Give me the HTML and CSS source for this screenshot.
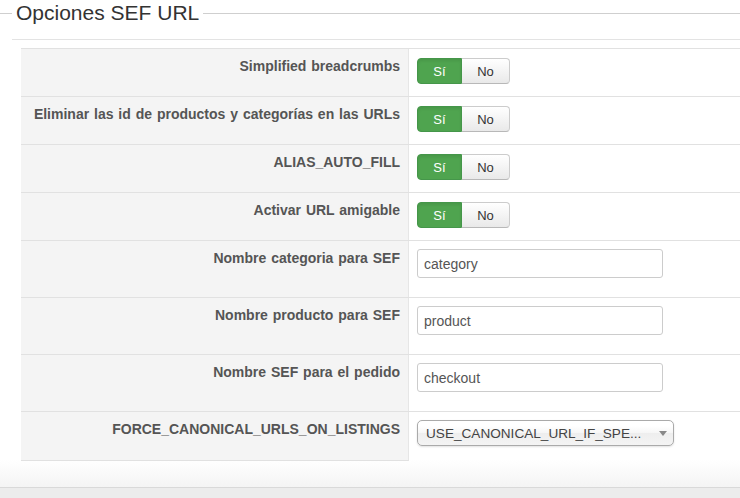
FILE: index.html
```html
<!DOCTYPE html>
<html lang="es">
<head>
<meta charset="utf-8">
<title>Opciones SEF URL</title>
<link rel="stylesheet" href="styles.css">
</head>
<body>
<fieldset class="sef">
  <legend class="sef-title">Opciones SEF URL</legend>
  <div class="sef-body">
    <div class="opts">
      <div class="row row-toggle">
        <div class="label label-toggle">Simplified breadcrumbs</div>
        <div class="ctrl"><div class="toggle"><span class="btn btn-yes">Sí</span><span class="btn btn-no">No</span></div></div>
      </div>
      <div class="row row-toggle">
        <div class="label label-toggle">Eliminar las id de productos y categorías en las URLs</div>
        <div class="ctrl"><div class="toggle"><span class="btn btn-yes">Sí</span><span class="btn btn-no">No</span></div></div>
      </div>
      <div class="row row-toggle">
        <div class="label label-toggle">ALIAS_AUTO_FILL</div>
        <div class="ctrl"><div class="toggle"><span class="btn btn-yes">Sí</span><span class="btn btn-no">No</span></div></div>
      </div>
      <div class="row row-toggle">
        <div class="label label-toggle">Activar URL amigable</div>
        <div class="ctrl"><div class="toggle"><span class="btn btn-yes">Sí</span><span class="btn btn-no">No</span></div></div>
      </div>
      <div class="row row-input">
        <div class="label">Nombre categoria para SEF</div>
        <div class="ctrl ctrl-input"><input class="text" type="text" value="category"></div>
      </div>
      <div class="row row-input">
        <div class="label">Nombre producto para SEF</div>
        <div class="ctrl ctrl-input"><input class="text" type="text" value="product"></div>
      </div>
      <div class="row row-input">
        <div class="label">Nombre SEF para el pedido</div>
        <div class="ctrl ctrl-input"><input class="text" type="text" value="checkout"></div>
      </div>
      <div class="row row-last">
        <div class="label label-last">FORCE_CANONICAL_URLS_ON_LISTINGS</div>
        <div class="ctrl ctrl-input">
          <div class="select"><span class="select-text">USE_CANONICAL_URL_IF_SPE...</span><span class="caret"></span></div>
        </div>
      </div>
    </div>
  </div>
</fieldset>
<div class="footer"></div>
<div class="footer-bar"></div>
</body>
</html>
```

FILE: styles.css
```css
html, body {
  margin: 0;
  padding: 0;
  background: #fff;
}
body {
  width: 740px;
  height: 498px;
  overflow: hidden;
  font-family: "Liberation Sans", Arial, sans-serif;
  color: #333;
}
.sef {
  margin: 1px 0 0 0;
  padding: 0;
  border: 0;
  border-top: 1px solid #cfcfcf;
  min-width: 0;
}
.sef-title {
  margin-left: 12px;
  padding: 0 4px;
  font-size: 21px;
  line-height: 24px;
  color: #333;
}
.sef-body {
  margin: 14px 0 0 12px;
  border-top: 1px solid #e3e3e3;
  padding: 8px 0 0 9px;
}
.opts {
  display: flex;
  flex-direction: column;
}
.row {
  display: grid;
  grid-template-columns: 388px 1fr;
  border-top: 1px solid #e1e1e1;
  box-sizing: border-box;
}
.row-toggle { height: 48px; }
.row-input { height: 57px; }
.row-last { height: 49px; }
.label {
  box-sizing: border-box;
  background: #f4f4f4;
  border-right: 1px solid #e6e6e6;
  text-align: right;
  padding: 8px 8px 0 0;
  font-size: 14px;
  line-height: 18px;
  font-weight: bold;
  word-spacing: 1px;
  color: #555;
}
.label-last {
  height: 49px;
  border-bottom: 1px solid #e1e1e1;
}
.ctrl {
  padding: 9px 0 0 8px;
}
.ctrl-input { padding-top: 8px; }
.toggle {
  display: flex;
  width: 93px;
  height: 26px;
}
.btn {
  box-sizing: border-box;
  height: 26px;
  display: flex;
  align-items: center;
  justify-content: center;
  font-size: 13px;
}
.btn-yes {
  width: 45px;
  color: #fff;
  background: #4fa44f;
  border: 1px solid #45964a;
  border-radius: 4px 0 0 4px;
  box-shadow: inset 0 2px 3px rgba(0,0,0,0.08);
}
.btn-no {
  width: 48px;
  color: #333;
  background: linear-gradient(#ffffff, #e9e9e9);
  border: 1px solid #cccccc;
  border-left: 0;
  border-bottom-color: #b8b8b8;
  border-radius: 0 4px 4px 0;
}
.text {
  display: block;
  box-sizing: border-box;
  width: 246px;
  height: 29px;
  margin: 0;
  padding: 0 6px;
  border: 1px solid #cccccc;
  border-radius: 3px;
  background: #fff;
  font-family: "Liberation Sans", Arial, sans-serif;
  font-size: 14px;
  color: #555;
  outline: none;
}
.select {
  box-sizing: border-box;
  width: 257px;
  height: 26px;
  border: 1px solid #aaaaaa;
  border-radius: 5px;
  background: linear-gradient(#ffffff 20%, #f6f6f6 50%, #eeeeee 52%, #f4f4f4 100%);
  box-shadow: 0 1px 2px rgba(0,0,0,0.12);
  display: flex;
  align-items: center;
  padding: 0 0 0 8px;
}
.select-text {
  flex: 1;
  font-size: 13.6px;
  color: #444;
  white-space: nowrap;
}
.caret {
  width: 0;
  height: 0;
  border-left: 4.5px solid transparent;
  border-right: 4.5px solid transparent;
  border-top: 5px solid #888;
  margin-right: 6px;
}
.footer {
  height: 27px;
  background: linear-gradient(#ffffff, #f4f4f4);
}
.footer-bar {
  height: 20px;
  border-top: 1px solid #d9d9d9;
  background: #ececec;
}
```
